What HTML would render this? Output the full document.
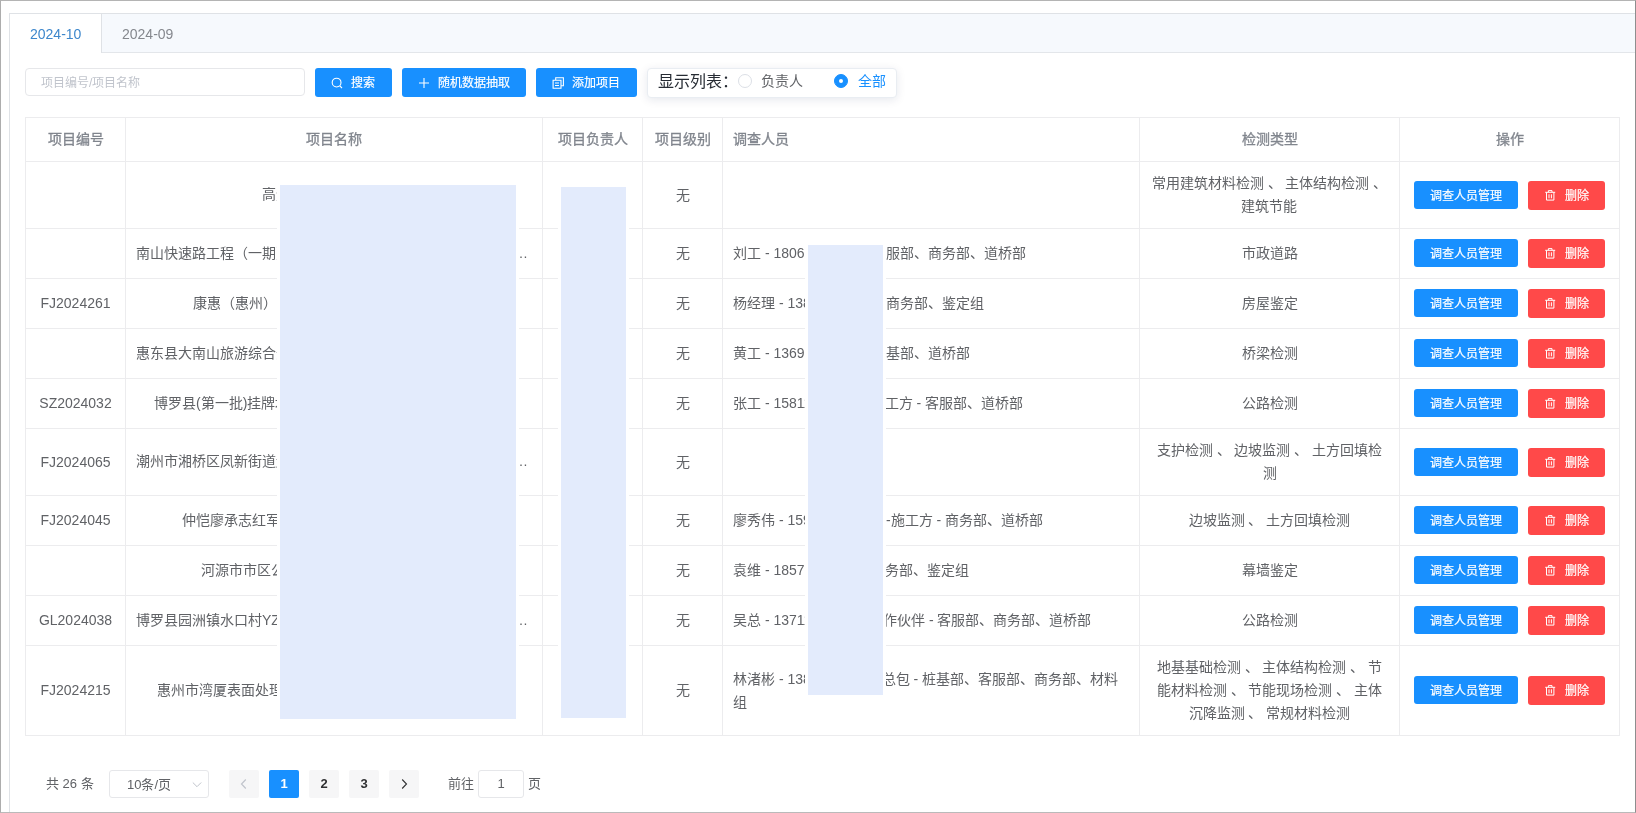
<!DOCTYPE html>
<html lang="zh-CN">
<head>
<meta charset="utf-8">
<title>项目列表</title>
<style>
*{box-sizing:border-box;}
html,body{margin:0;padding:0;}
body{width:1636px;height:813px;overflow:hidden;background:#fff;position:relative;
  font-family:"Liberation Sans",sans-serif;font-size:14px;color:#606266;}
.frame{position:absolute;left:0;top:0;width:1636px;height:813px;border:1px solid #b4b4b4;border-left-color:#adadad;border-right-color:#8e8e8e;border-bottom-color:#bababa;pointer-events:none;z-index:50;}
.card{position:absolute;left:9px;top:13px;width:1700px;height:900px;border:1px solid #dfe2e6;background:#fff;}
.tabhead{position:absolute;left:0;top:0;width:100%;height:39px;background:#f6f9fd;border-bottom:1px solid #e3e6ea;}
.tab{position:absolute;top:0;height:39px;line-height:40px;font-size:14px;color:#85888e;white-space:nowrap;}
.tab.active{left:0;width:91px;background:#fff;color:#3d87cc;height:40px;padding-left:20px;}
.tab.active:after{content:"";position:absolute;right:-1px;top:0;width:1px;height:39px;background:#dfe2e6;}
.tab.t2{left:112px;}
/* toolbar */
.inp{position:absolute;left:25px;top:68px;width:280px;height:28px;border:1px solid #e6e7ea;border-radius:4px;background:#fff;
  font-size:12px;color:#c0c4cc;line-height:28px;padding-left:15px;white-space:nowrap;overflow:hidden;}
.btn{position:absolute;height:28px;border-radius:3px;color:#fff;font-size:12px;line-height:28px;white-space:nowrap;}
.btn.tb{height:29px;}
.btn.tb span{top:1px;}
.btn.tb svg{margin-top:0.5px;overflow:visible;}
.btn.blue{background:#1890ff;}
.btn.red{background:#ff4949;height:29px;}
.btn svg{position:absolute;}
.btn span{position:absolute;top:1px;-webkit-text-stroke:0.2px #fff;}
.rg{position:absolute;left:647px;top:68px;width:250px;height:30px;border-radius:4px;background:#fff;border:1px solid #e9edf2;
  box-shadow:0 2px 10px rgba(0,30,80,.10);}
.rg .lbl{position:absolute;left:10px;top:1px;line-height:24px;font-size:16px;color:#262b33;white-space:nowrap;}
.rg .r{position:absolute;top:5px;width:14px;height:14px;border-radius:50%;border:1px solid #dcdfe6;background:#fff;}
.rg .r.on{border-color:#1890ff;background:#1890ff;}
.rg .r.on:after{content:"";position:absolute;left:4px;top:4px;width:4px;height:4px;border-radius:50%;background:#fff;}
.rg .t{position:absolute;top:0;line-height:24px;font-size:14px;color:#606266;white-space:nowrap;}
.rg .t.on{color:#1890ff;}
/* table */
.tbl{position:absolute;left:25px;top:117px;width:1595px;height:619px;border-left:1px solid #ececee;border-top:1px solid #ececee;}
.row{position:absolute;left:0;width:1594px;border-bottom:1px solid #ececee;}
.c{position:absolute;top:0;height:100%;border-right:1px solid #ececee;display:flex;align-items:center;justify-content:center;
  text-align:center;padding:0 10px;line-height:23px;font-size:14px;color:#606266;overflow:hidden;white-space:nowrap;}
.c1{left:0;width:100px;}
.c2{left:100px;width:417px;justify-content:flex-start;white-space:nowrap;}
.c3{left:517px;width:100px;}
.c4{left:617px;width:80px;}
.c5{left:697px;width:417px;justify-content:flex-start;text-align:left;}
.c6{left:1114px;width:260px;}
.c7{left:1374px;width:220px;}
.hd .c{font-weight:normal;color:#80858d;-webkit-text-stroke:0.3px #80858d;}
.mask{position:absolute;background:#e3ebfc;z-index:5;box-shadow:-3px 0 0 #fff,3px 0 0 #fff;}
.el{position:absolute;left:388px;top:50%;margin-top:-12px;line-height:23px;}
.nm{position:absolute;top:50%;margin-top:-12px;line-height:23px;white-space:nowrap;}
.pl{position:absolute;left:10px;top:50%;margin-top:-12px;line-height:23px;white-space:nowrap;}

/* pagination */
.pg{position:absolute;font-size:13px;color:#606266;white-space:nowrap;line-height:28px;height:28px;}
.pb{position:absolute;top:770px;width:30px;height:28px;border-radius:2px;background:#f6f6f7;color:#303133;font-size:13px;font-weight:bold;text-align:center;line-height:28px;}
.pb.on{background:#1890ff;color:#fff;}
.pb svg{position:absolute;left:9px;top:8px;}
</style>
</head>
<body>
<div id="app" style="position:absolute;left:0;top:0;width:1636px;height:813px;will-change:transform;">
<div class="card">
  <div class="tabhead"></div>
  <div class="tab active">2024-10</div>
  <div class="tab t2">2024-09</div>
</div>

<div class="inp">项目编号/项目名称</div>

<div class="btn blue tb" style="left:315px;top:68px;width:77px;">
  <svg style="left:16px;top:8px" width="12" height="12" viewBox="0 0 12 12" fill="none" stroke="#fff" stroke-width="1.1"><circle cx="5.6" cy="5.6" r="4.4"/><path d="M8.8 8.8 L11 11"/></svg>
  <span style="left:36px">搜索</span>
</div>
<div class="btn blue tb" style="left:402px;top:68px;width:124px;">
  <svg style="left:16px;top:8px" width="12" height="12" viewBox="0 0 12 12" fill="none" stroke="#fff" stroke-width="1.1"><path d="M6 1 V11 M1 6 H11"/></svg>
  <span style="left:36px">随机数据抽取</span>
</div>
<div class="btn blue tb" style="left:536px;top:68px;width:101px;">
  <svg style="left:16px;top:8px" width="12" height="12" viewBox="0 0 12 12" fill="none" stroke="#fff" stroke-width="1.1"><path d="M1.1 3.3 H9 V11.3 H1.1 Z M3.7 3.3 V0.8 H11.4 V8.8 H9 M3 6 H7 M3 8.5 H7"/></svg>
  <span style="left:36px">添加项目</span>
</div>

<div class="rg">
  <div class="lbl">显示列表：</div>
  <div class="r" style="left:90px"></div><div class="t" style="left:113px">负责人</div>
  <div class="r on" style="left:186px"></div><div class="t on" style="left:210px">全部</div>
</div>

<div class="tbl" id="tbl">
  <div class="row hd" style="top:0;height:44px;">
    <div class="c c1">项目编号</div><div class="c c2" style="justify-content:center">项目名称</div><div class="c c3">项目负责人</div><div class="c c4">项目级别</div><div class="c c5">调查人员</div><div class="c c6">检测类型</div><div class="c c7">操作</div>
  </div>
  <div class="row" style="top:44px;height:67px;">
    <div class="c c1"></div>
    <div class="c c2"><span class="nm" style="left:136px">高速公路改扩建工程试验检测项目</span></div>
    <div class="c c3"></div>
    <div class="c c4">无</div>
    <div class="c c5"></div>
    <div class="c c6">常用建筑材料检测 、 主体结构检测 、<br>建筑节能</div>
    <div class="c c7"><div class="btn blue" style="left:14px;top:19px;width:104px;"><span style="left:16px">调查人员管理</span></div><div class="btn red" style="left:128px;top:19px;width:77px;"><svg style="left:16px;top:8px" width="12" height="12" viewBox="0 0 12 12" fill="none" stroke="#fff" stroke-width="1"><path d="M1.2 3.3 H11.2 M4.4 3.3 V1.6 H8 V3.3 M2.5 3.3 V11.1 H9.9 V3.3 M5 5.3 V9.3 M7.4 5.3 V9.3"/></svg><span style="left:37px">删除</span></div></div>
  </div>
  <div class="row" style="top:111px;height:50px;">
    <div class="c c1"></div>
    <div class="c c2"><span class="nm" style="left:10px">南山快速路工程（一期）道路桥梁检测及监测服务</span><span class="el">…</span></div>
    <div class="c c3"></div>
    <div class="c c4">无</div>
    <div class="c c5"><span class="pl">刘工 - 18061234567 - 客</span><span class="pl" style="left:148.5px">客服部、商务部、道桥部</span></div>
    <div class="c c6">市政道路</div>
    <div class="c c7"><div class="btn blue" style="left:14px;top:10px;width:104px;"><span style="left:16px">调查人员管理</span></div><div class="btn red" style="left:128px;top:10px;width:77px;"><svg style="left:16px;top:8px" width="12" height="12" viewBox="0 0 12 12" fill="none" stroke="#fff" stroke-width="1"><path d="M1.2 3.3 H11.2 M4.4 3.3 V1.6 H8 V3.3 M2.5 3.3 V11.1 H9.9 V3.3 M5 5.3 V9.3 M7.4 5.3 V9.3"/></svg><span style="left:37px">删除</span></div></div>
  </div>
  <div class="row" style="top:161px;height:50px;">
    <div class="c c1">FJ2024261</div>
    <div class="c c2"><span class="nm" style="left:67px">康惠（惠州）半导体有限公司厂房鉴定</span></div>
    <div class="c c3"></div>
    <div class="c c4">无</div>
    <div class="c c5"><span class="pl">杨经理 - 13812345678 -</span><span class="pl" style="left:162.5px">商务部、鉴定组</span></div>
    <div class="c c6">房屋鉴定</div>
    <div class="c c7"><div class="btn blue" style="left:14px;top:10px;width:104px;"><span style="left:16px">调查人员管理</span></div><div class="btn red" style="left:128px;top:10px;width:77px;"><svg style="left:16px;top:8px" width="12" height="12" viewBox="0 0 12 12" fill="none" stroke="#fff" stroke-width="1"><path d="M1.2 3.3 H11.2 M4.4 3.3 V1.6 H8 V3.3 M2.5 3.3 V11.1 H9.9 V3.3 M5 5.3 V9.3 M7.4 5.3 V9.3"/></svg><span style="left:37px">删除</span></div></div>
  </div>
  <div class="row" style="top:211px;height:50px;">
    <div class="c c1"></div>
    <div class="c c2"><span class="nm" style="left:10px">惠东县大南山旅游综合开发项目桥梁检测服务</span></div>
    <div class="c c3"></div>
    <div class="c c4">无</div>
    <div class="c c5"><span class="pl">黄工 - 13691234567 -</span><span class="pl" style="left:149px">桩基部、道桥部</span></div>
    <div class="c c6">桥梁检测</div>
    <div class="c c7"><div class="btn blue" style="left:14px;top:10px;width:104px;"><span style="left:16px">调查人员管理</span></div><div class="btn red" style="left:128px;top:10px;width:77px;"><svg style="left:16px;top:8px" width="12" height="12" viewBox="0 0 12 12" fill="none" stroke="#fff" stroke-width="1"><path d="M1.2 3.3 H11.2 M4.4 3.3 V1.6 H8 V3.3 M2.5 3.3 V11.1 H9.9 V3.3 M5 5.3 V9.3 M7.4 5.3 V9.3"/></svg><span style="left:37px">删除</span></div></div>
  </div>
  <div class="row" style="top:261px;height:50px;">
    <div class="c c1">SZ2024032</div>
    <div class="c c2"><span class="nm" style="left:28px">博罗县(第一批)挂牌地块道路检测</span></div>
    <div class="c c3"></div>
    <div class="c c4">无</div>
    <div class="c c5"><span class="pl">张工 - 15811234567 - 施</span><span class="pl" style="left:147.5px">施工方 - 客服部、道桥部</span></div>
    <div class="c c6">公路检测</div>
    <div class="c c7"><div class="btn blue" style="left:14px;top:10px;width:104px;"><span style="left:16px">调查人员管理</span></div><div class="btn red" style="left:128px;top:10px;width:77px;"><svg style="left:16px;top:8px" width="12" height="12" viewBox="0 0 12 12" fill="none" stroke="#fff" stroke-width="1"><path d="M1.2 3.3 H11.2 M4.4 3.3 V1.6 H8 V3.3 M2.5 3.3 V11.1 H9.9 V3.3 M5 5.3 V9.3 M7.4 5.3 V9.3"/></svg><span style="left:37px">删除</span></div></div>
  </div>
  <div class="row" style="top:311px;height:67px;">
    <div class="c c1">FJ2024065</div>
    <div class="c c2"><span class="nm" style="left:10px">潮州市湘桥区凤新街道边坡及基坑支护监测项目</span><span class="el">…</span></div>
    <div class="c c3"></div>
    <div class="c c4">无</div>
    <div class="c c5"></div>
    <div class="c c6">支护检测 、 边坡监测 、 土方回填检<br>测</div>
    <div class="c c7"><div class="btn blue" style="left:14px;top:19px;width:104px;"><span style="left:16px">调查人员管理</span></div><div class="btn red" style="left:128px;top:19px;width:77px;"><svg style="left:16px;top:8px" width="12" height="12" viewBox="0 0 12 12" fill="none" stroke="#fff" stroke-width="1"><path d="M1.2 3.3 H11.2 M4.4 3.3 V1.6 H8 V3.3 M2.5 3.3 V11.1 H9.9 V3.3 M5 5.3 V9.3 M7.4 5.3 V9.3"/></svg><span style="left:37px">删除</span></div></div>
  </div>
  <div class="row" style="top:378px;height:50px;">
    <div class="c c1">FJ2024045</div>
    <div class="c c2"><span class="nm" style="left:56px">仲恺廖承志红军小学边坡监测</span></div>
    <div class="c c3"></div>
    <div class="c c4">无</div>
    <div class="c c5"><span class="pl">廖秀伟 - 15912345678</span><span class="pl" style="left:163px">-施工方 - 商务部、道桥部</span></div>
    <div class="c c6">边坡监测 、 土方回填检测</div>
    <div class="c c7"><div class="btn blue" style="left:14px;top:10px;width:104px;"><span style="left:16px">调查人员管理</span></div><div class="btn red" style="left:128px;top:10px;width:77px;"><svg style="left:16px;top:8px" width="12" height="12" viewBox="0 0 12 12" fill="none" stroke="#fff" stroke-width="1"><path d="M1.2 3.3 H11.2 M4.4 3.3 V1.6 H8 V3.3 M2.5 3.3 V11.1 H9.9 V3.3 M5 5.3 V9.3 M7.4 5.3 V9.3"/></svg><span style="left:37px">删除</span></div></div>
  </div>
  <div class="row" style="top:428px;height:50px;">
    <div class="c c1"></div>
    <div class="c c2"><span class="nm" style="left:75px">河源市市区公共建筑幕墙鉴定</span></div>
    <div class="c c3"></div>
    <div class="c c4">无</div>
    <div class="c c5"><span class="pl">袁维 - 18571234567 - 商</span><span class="pl" style="left:148px">商务部、鉴定组</span></div>
    <div class="c c6">幕墙鉴定</div>
    <div class="c c7"><div class="btn blue" style="left:14px;top:10px;width:104px;"><span style="left:16px">调查人员管理</span></div><div class="btn red" style="left:128px;top:10px;width:77px;"><svg style="left:16px;top:8px" width="12" height="12" viewBox="0 0 12 12" fill="none" stroke="#fff" stroke-width="1"><path d="M1.2 3.3 H11.2 M4.4 3.3 V1.6 H8 V3.3 M2.5 3.3 V11.1 H9.9 V3.3 M5 5.3 V9.3 M7.4 5.3 V9.3"/></svg><span style="left:37px">删除</span></div></div>
  </div>
  <div class="row" style="top:478px;height:50px;">
    <div class="c c1">GL2024038</div>
    <div class="c c2"><span class="nm" style="left:10px">博罗县园洲镇水口村YZ地块配套道路检测工程</span><span class="el">…</span></div>
    <div class="c c3"></div>
    <div class="c c4">无</div>
    <div class="c c5"><span class="pl">吴总 - 13711234567 - 合</span><span class="pl" style="left:146px">合作伙伴 - 客服部、商务部、道桥部</span></div>
    <div class="c c6">公路检测</div>
    <div class="c c7"><div class="btn blue" style="left:14px;top:10px;width:104px;"><span style="left:16px">调查人员管理</span></div><div class="btn red" style="left:128px;top:10px;width:77px;"><svg style="left:16px;top:8px" width="12" height="12" viewBox="0 0 12 12" fill="none" stroke="#fff" stroke-width="1"><path d="M1.2 3.3 H11.2 M4.4 3.3 V1.6 H8 V3.3 M2.5 3.3 V11.1 H9.9 V3.3 M5 5.3 V9.3 M7.4 5.3 V9.3"/></svg><span style="left:37px">删除</span></div></div>
  </div>
  <div class="row" style="top:528px;height:90px;">
    <div class="c c1">FJ2024215</div>
    <div class="c c2"><span class="nm" style="left:31px">惠州市湾厦表面处理产业园检测</span></div>
    <div class="c c3"></div>
    <div class="c c4">无</div>
    <div class="c c5"><span class="pl" style="top:22px;margin-top:0">林渚彬 - 13812345678</span><span class="pl" style="top:22px;margin-top:0;left:158.5px">总包 - 桩基部、客服部、商务部、材料</span><span class="pl" style="top:45px;margin-top:0">组</span></div>
    <div class="c c6">地基基础检测 、 主体结构检测 、 节<br>能材料检测 、 节能现场检测 、 主体<br>沉降监测 、 常规材料检测</div>
    <div class="c c7"><div class="btn blue" style="left:14px;top:30px;width:104px;"><span style="left:16px">调查人员管理</span></div><div class="btn red" style="left:128px;top:30px;width:77px;"><svg style="left:16px;top:8px" width="12" height="12" viewBox="0 0 12 12" fill="none" stroke="#fff" stroke-width="1"><path d="M1.2 3.3 H11.2 M4.4 3.3 V1.6 H8 V3.3 M2.5 3.3 V11.1 H9.9 V3.3 M5 5.3 V9.3 M7.4 5.3 V9.3"/></svg><span style="left:37px">删除</span></div></div>
  </div>
</div>

<div class="mask" style="left:280px;top:185px;width:236px;height:534px;"></div>
<div class="mask" style="left:561px;top:187px;width:65px;height:531px;"></div>
<div class="mask" style="left:808px;top:245px;width:75px;height:450px;"></div>

<div class="pg" style="left:46px;top:770px;">共 26 条</div>
<div class="pg" style="left:109px;top:770px;width:100px;border:1px solid #e6e7ea;border-radius:3px;line-height:27px;padding-left:17px;">10条/页
  <svg style="position:absolute;left:82px;top:10px" width="11" height="8" viewBox="0 0 11 8" fill="none" stroke="#c0c4cc" stroke-width="1"><path d="M0.8 1.5 L5 5.7 L9.2 1.5"/></svg>
</div>
<div class="pb" style="left:229px;color:#c0c4cc"><svg width="12" height="12" viewBox="0 0 12 12" fill="none" stroke="#c0c4cc" stroke-width="1.2"><path d="M7.8 1.5 L3.5 6 L7.8 10.5"/></svg></div>
<div class="pb on" style="left:269px;">1</div>
<div class="pb" style="left:309px;">2</div>
<div class="pb" style="left:349px;">3</div>
<div class="pb" style="left:389px;"><svg width="12" height="12" viewBox="0 0 12 12" fill="none" stroke="#303133" stroke-width="1.1"><path d="M4.2 1.5 L8.5 6 L4.2 10.5"/></svg></div>
<div class="pg" style="left:448px;top:770px;">前往</div>
<div class="pg" style="left:478px;top:770px;width:46px;border:1px solid #e6e7ea;border-radius:3px;text-align:center;line-height:25px;">1</div>
<div class="pg" style="left:528px;top:770px;">页</div>

</div>
<div class="frame"></div>
</body>
</html>
